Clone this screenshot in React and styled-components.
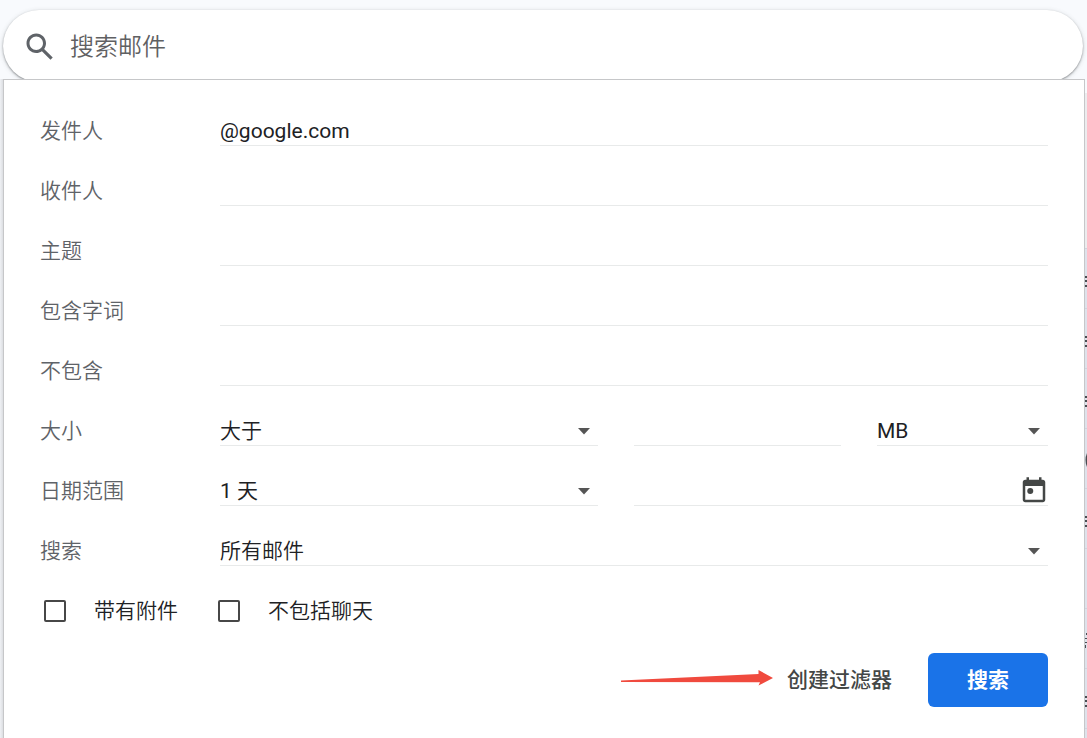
import React from "react";
import styled, { createGlobalStyle } from "styled-components";

const GlobalStyle = createGlobalStyle`
  *, *::before, *::after { box-sizing: border-box; }
  body {
    margin: 0;
    background: #f8fafd;
    font-family: Roboto, "Noto Sans CJK SC", sans-serif;
    font-size: 21px;
    font-weight: 350;
    line-height: 30px;
    color: #202124;
  }
  input, select, button { font: inherit; color: inherit; }
`;

const Page = styled.div`
  display: flex;
  flex-direction: column;
  min-height: 100vh;
  padding-top: 10px;
`;

const SearchBar = styled.div`
  display: flex;
  align-items: center;
  gap: 12px;
  height: 72px;
  margin: 0 4px 0 3px;
  padding: 2px 36px 0 19px;
  border-radius: 36px;
  background: #fff;
  box-shadow: 0 1px 2px rgba(60, 64, 67, 0.5), 0 1px 5px rgba(60, 64, 67, 0.18);
`;

const SearchIcon = styled.svg`
  flex: none;
  width: 36px;
  height: 36px;
  fill: #5f6368;
`;

const SearchInput = styled.input`
  flex: 1;
  min-width: 0;
  height: 48px;
  padding: 0;
  border: 0;
  outline: 0;
  background: transparent;
  font-size: 24px;
  &::placeholder { color: #5f6062; opacity: 1; }
`;

const Body = styled.div`
  display: flex;
  flex: 1;
  margin-top: -3px;
`;

const LeftEdge = styled.div`
  width: 3px;
  background: linear-gradient(90deg, #eff1f4, #dcdee2);
`;

const MailList = styled.div`
  display: flex;
  flex-direction: column;
  width: 2px;
  padding-top: 14px;
`;

const MailListHead = styled.div`
  height: 155px;
  background: #ececee;
`;

const MailRow = styled.div`
  height: 60px;
  border-top: 1px solid #cfd4de;
  background: #dee2eb;
  svg { display: block; }
  &:last-child { flex: 1; height: auto; }
`;

const Panel = styled.form`
  position: relative;
  flex: 1;
  min-width: 0;
  display: flex;
  flex-direction: column;
  gap: 30px;
  padding: 36px 36px 24px;
  border: 1px solid #c6c7c9;
  border-bottom: 0;
  background: #fff;
`;

const Row = styled.div`
  display: grid;
  grid-template-columns: 180px 1fr;
`;

const Label = styled.label`
  color: #5f6368;
`;

const Fields = styled.div`
  display: grid;
  grid-template-columns: 378fr 207fr 171fr;
  gap: 36px;
`;

const Field = styled.div`
  display: flex;
  grid-column: span ${(p) => p.$span || 1};
  position: relative;
  min-width: 0;
  height: 30px;
  border-bottom: 1px solid #e8eaea;
`;

const TextInput = styled.input`
  flex: 1;
  min-width: 0;
  padding: 0;
  border: 0;
  outline: 0;
  background: transparent;
  font-weight: 400;
`;

const Select = styled.select`
  flex: 1;
  min-width: 0;
  padding: 0;
  border: 0;
  outline: 0;
  appearance: none;
  background: transparent;
  font-weight: ${(p) => (p.$latin ? 400 : 350)};
`;

const Caret = styled.svg`
  position: absolute;
  right: 8px;
  top: 12px;
  width: 12px;
  height: 7px;
  fill: #555;
  pointer-events: none;
`;

const IconButton = styled.button`
  flex: none;
  width: 30px;
  height: 30px;
  margin-right: -1px;
  padding: 0;
  border: 0;
  background: transparent;
  svg { display: block; fill: #444746; }
`;

const Checks = styled.div`
  display: flex;
  gap: 40px;
  padding-left: 4px;
`;

const CheckLabel = styled.label`
  display: flex;
  align-items: center;
  gap: 28px;
`;

const Checkbox = styled.input`
  appearance: none;
  width: 22px;
  height: 22px;
  margin: 0;
  border: 2px solid #474747;
  border-radius: 2px;
  &:checked { background: #474747; }
`;

const Actions = styled.div`
  display: flex;
  justify-content: flex-end;
  align-items: center;
  margin-top: -3px;
`;

const Arrow = styled.svg`
  width: 152px;
  height: 20px;
  margin-right: 14px;
  fill: #f04a3e;
`;

const FilterButton = styled.button`
  padding: 0;
  margin-right: 36px;
  border: 0;
  background: transparent;
  color: #444746;
  font-weight: 500;
`;

const SubmitButton = styled.button`
  width: 120px;
  height: 54px;
  padding: 0;
  border: 0;
  border-radius: 6px;
  background: #1a73e8;
  color: #fff;
  font-weight: 700;
`;

const textRows = [
  ["from", "发件人", "@google.com"],
  ["to", "收件人", ""],
  ["subject", "主题", ""],
  ["has", "包含字词", ""],
  ["without", "不包含", ""],
];

const dashes = "M0 27h2v2h-2zM0 31h2v2h-2zM0 36h2v2h-2z";
const mailMarks = [
  dashes,
  dashes,
  dashes,
  "M2 24Q-1 31 2 38z",
  dashes,
  "",
  "M1 24h1v2h-1zM0 29h2v1h-2zM0 33h2v1h-2zM0 36h1v3h-1z",
  dashes,
  "",
];

function SelectField({ id, label, value, latin }) {
  return (
    <>
      <Select id={id} aria-label={label} defaultValue={value} $latin={latin}>
        <option>{value}</option>
      </Select>
      <Caret viewBox="0 0 12 7" aria-hidden="true">
        <path d="M0 0h12L6 6.500z" />
      </Caret>
    </>
  );
}

export default function App() {
  return (
    <Page>
      <GlobalStyle />
      <SearchBar>
        <SearchIcon viewBox="0 0 24 24" aria-hidden="true">
          <path d="M20.49 19l-5.73-5.73C15.53 12.2 16 10.91 16 9.5 16 5.91 13.09 3 9.5 3S3 5.91 3 9.5 5.91 16 9.5 16c1.41 0 2.7-.47 3.77-1.24L19 20.49 20.49 19zM5 9.5C5 7.01 7.01 5 9.5 5S14 7.01 14 9.5 11.99 14 9.5 14 5 11.99 5 9.5z" />
        </SearchIcon>
        <SearchInput type="text" aria-label="搜索邮件" placeholder="搜索邮件" />
      </SearchBar>
      <Body>
        <LeftEdge />
        <Panel onSubmit={(e) => e.preventDefault()}>
          {textRows.map(([id, label, value]) => (
            <Row key={id}>
              <Label htmlFor={id}>{label}</Label>
              <Field>
                <TextInput id={id} type="text" defaultValue={value} />
              </Field>
            </Row>
          ))}
          <Row>
            <Label htmlFor="size">大小</Label>
            <Fields>
              <Field>
                <SelectField id="size" value="大于" />
              </Field>
              <Field>
                <TextInput type="text" aria-label="大小" />
              </Field>
              <Field>
                <SelectField id="unit" label="单位" value="MB" latin />
              </Field>
            </Fields>
          </Row>
          <Row>
            <Label htmlFor="range">日期范围</Label>
            <Fields>
              <Field>
                <SelectField id="range" value="1 天" latin />
              </Field>
              <Field $span={2}>
                <TextInput type="text" aria-label="日期" />
                <IconButton type="button" aria-label="选择日期">
                  <svg width="30" height="30" viewBox="0 0 24 24">
                    <path d="M19 3h-1V1h-2v2H8V1H6v2H5c-1.11 0-2 .9-2 2v14c0 1.1.89 2 2 2h14c1.1 0 2-.9 2-2V5c0-1.1-.9-2-2-2zm0 16H5V8h14v11z" />
                    <circle cx="9" cy="12" r="2.4" />
                  </svg>
                </IconButton>
              </Field>
            </Fields>
          </Row>
          <Row>
            <Label htmlFor="scope">搜索</Label>
            <Field>
              <SelectField id="scope" value="所有邮件" />
            </Field>
          </Row>
          <Checks>
            <CheckLabel>
              <Checkbox type="checkbox" />
              带有附件
            </CheckLabel>
            <CheckLabel>
              <Checkbox type="checkbox" />
              不包括聊天
            </CheckLabel>
          </Checks>
          <Actions>
            <Arrow viewBox="0 0 152 20" aria-hidden="true">
              <path d="M0 10.6L137.500 4 137.500 0 152 8 137.500 15.500 139 12.200 0 12z" />
            </Arrow>
            <FilterButton type="button">创建过滤器</FilterButton>
            <SubmitButton type="submit">搜索</SubmitButton>
          </Actions>
        </Panel>
        <MailList aria-hidden="true">
          <MailListHead />
          {mailMarks.map((d, i) => (
            <MailRow key={i}>
              {d && (
                <svg width="2" height="59" viewBox="0 0 2 59">
                  <path d={d} fill="#4a4d52" />
                </svg>
              )}
            </MailRow>
          ))}
        </MailList>
      </Body>
    </Page>
  );
}
